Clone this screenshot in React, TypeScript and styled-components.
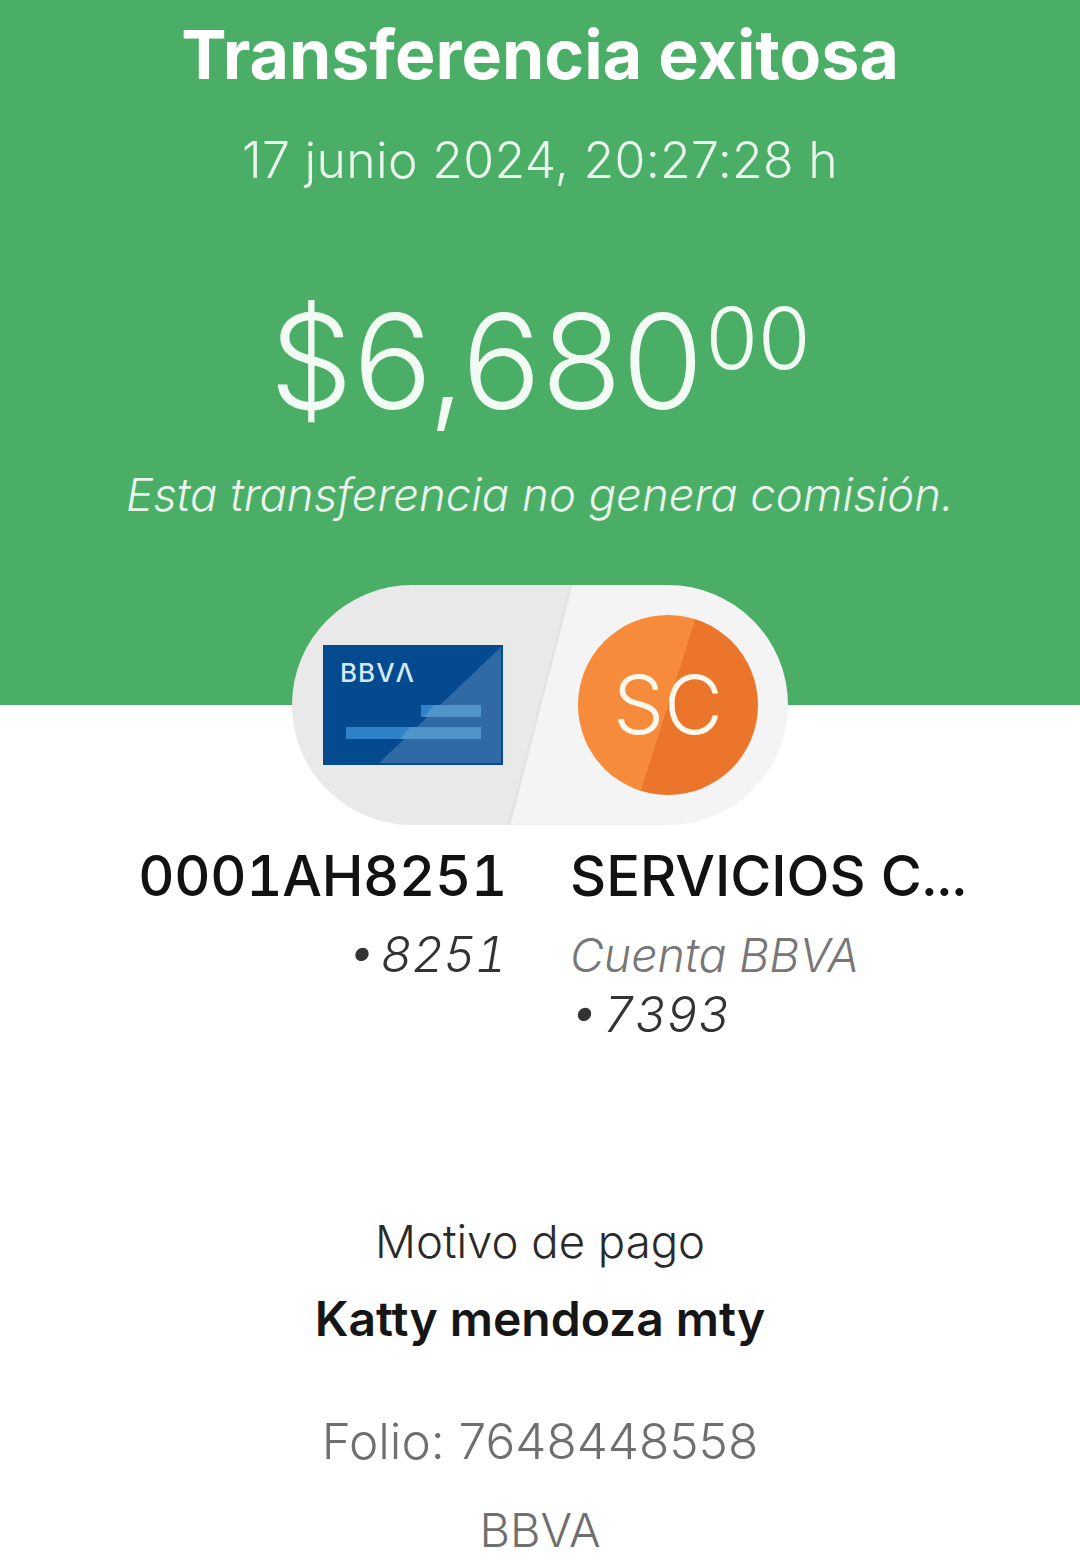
import React from 'react';
import styled, {createGlobalStyle} from 'styled-components';

const GlobalStyle = createGlobalStyle`
  html, body {
    margin: 0;
    padding: 0;
    background: #fff;
  }
  body {
    font-family: Inter, "Liberation Sans", sans-serif;
  }
`;

const Page = styled.div`
  width: 1080px;
  height: 1564px;
  overflow: hidden;
  background: #fff;
  display: flex;
  flex-direction: column;
  align-items: center;
`;

const Header = styled.header`
  width: 100%;
  height: 705px;
  flex: none;
  background: #4bae66;
  color: #fff;
  display: flex;
  flex-direction: column;
  align-items: center;
  padding-top: 14px;
  box-sizing: border-box;
`;

const Title = styled.h1`
  margin: 0;
  font-size: 68px;
  line-height: 80px;
  font-weight: 700;
  white-space: nowrap;
`;

const DateLine = styled.div`
  margin-top: 36px;
  font-size: 50px;
  line-height: 60px;
  font-weight: 300;
  color: #e9f5ec;
  letter-spacing: 0.3px;
  white-space: nowrap;
`;

const Amount = styled.div`
  margin-top: 101px;
  display: flex;
  align-items: flex-start;
  font-size: 132px;
  line-height: 140px;
  font-weight: 300;
  color: #f2faf4;
  white-space: nowrap;
`;

const Cents = styled.span`
  font-size: 85px;
  line-height: 96px;
  margin-left: 2px;
`;

const Note = styled.div`
  margin-top: 34px;
  font-size: 45.5px;
  line-height: 60px;
  font-weight: 300;
  font-style: italic;
  color: #e9f5ec;
  white-space: nowrap;
`;

const Pill = styled.div`
  flex: none;
  margin-top: -120px;
  width: 496px;
  height: 240px;
  border-radius: 120px;
  background: linear-gradient(104.5deg, #e9e9e9 0 49.7%, #e0e0e0 50%, #f4f4f4 50.4% 100%);
  display: flex;
  align-items: center;
  justify-content: space-between;
  padding: 0 30px 0 31px;
  box-sizing: border-box;
  position: relative;
`;

const Card = styled.svg`
  width: 180px;
  height: 120px;
  display: block;
`;

const Avatar = styled.div`
  width: 180px;
  height: 180px;
  border-radius: 50%;
  background: linear-gradient(107.6deg, #f68b3c 0 50%, #ec752c 50% 100%);
  color: #fff8ec;
  font-size: 81px;
  font-weight: 300;
  display: flex;
  align-items: center;
  justify-content: center;
`;

const Parties = styled.div`
  width: 100%;
  display: grid;
  grid-template-columns: 507px 1fr;
  column-gap: 63px;
  margin-top: 20px;
  height: 367px;
  flex: none;
`;

const Party = styled.div<{$align: 'left' | 'right'}>`
  text-align: ${p => p.$align};
`;

const PartyName = styled.div<{$digits?: boolean}>`
  font-size: 56px;
  line-height: 62px;
  font-weight: 500;
  color: #121212;
  font-variant-numeric: tabular-nums;
  letter-spacing: ${p => (p.$digits ? -0.3 : 0)}px;
  white-space: nowrap;
  margin-bottom: 18px;
`;

const PartyDetail = styled.div<{$muted?: boolean}>`
  font-size: ${p => (p.$muted ? 46.5 : 49)}px;
  line-height: 60px;
  font-weight: 300;
  font-style: italic;
  font-variant-numeric: tabular-nums;
  word-spacing: ${p => (p.$muted ? 0 : -8)}px;
  color: ${p => (p.$muted ? '#777' : '#333')};
  white-space: nowrap;
`;

const CenterLine = styled.div<{$size: number; $weight: number; $color: string; $top: number}>`
  margin-top: ${p => p.$top}px;
  font-size: ${p => p.$size}px;
  line-height: 60px;
  font-weight: ${p => p.$weight};
  color: ${p => p.$color};
  white-space: nowrap;
`;

function BankCard() {
    return (
        <Card viewBox="0 0 180 120">
            <rect width="180" height="120" fill="#034a8f"/>
            <polygon points="178,2 178,118 56,118" fill="#2f6aa6"/>
            <rect x="98" y="60" width="60" height="12" fill="#2f82c8"/>
            <rect x="23" y="82" width="135" height="12" fill="#2f82c8"/>
            <polygon points="111,60 158,60 158,72 101,72" fill="#4f94cb"/>
            <polygon points="87,82 158,82 158,94 77,94" fill="#4f94cb"/>
            <text x="17" y="37" fontSize="26" letterSpacing="1" fontWeight="500" fill="#d6e8f6" fontFamily="Inter, sans-serif">BBVΛ</text>
        </Card>
    );
}

export default function App() {
    return (
        <Page>
            <GlobalStyle/>
            <Header>
                <Title>Transferencia exitosa</Title>
                <DateLine>17 junio 2024, 20:27:28 h</DateLine>
                <Amount>$6,680<Cents>00</Cents></Amount>
                <Note>Esta transferencia no genera comisión.</Note>
            </Header>
            <Pill>
                <BankCard/>
                <Avatar>SC</Avatar>
            </Pill>
            <Parties>
                <Party $align="right">
                    <PartyName $digits>0001AH8251</PartyName>
                    <PartyDetail>• 8251</PartyDetail>
                </Party>
                <Party $align="left">
                    <PartyName>SERVICIOS C...</PartyName>
                    <PartyDetail $muted>Cuenta BBVA</PartyDetail>
                    <PartyDetail>• 7393</PartyDetail>
                </Party>
            </Parties>
            <CenterLine $size={45.5} $weight={300} $color="#2a2a2a" $top={0}>Motivo de pago</CenterLine>
            <CenterLine $size={48} $weight={600} $color="#161616" $top={17}>Katty mendoza mty</CenterLine>
            <CenterLine $size={49.5} $weight={300} $color="#6f6f6f" $top={62}>Folio: 7648448558</CenterLine>
            <CenterLine $size={47} $weight={300} $color="#6f6f6f" $top={29}>BBVA</CenterLine>
        </Page>
    );
}
